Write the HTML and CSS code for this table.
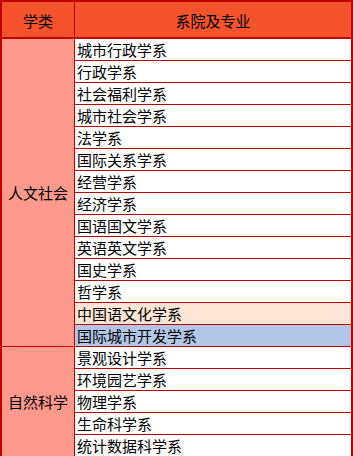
FILE: index.html
```html
<!DOCTYPE html>
<html lang="zh-CN">
<head>
<meta charset="utf-8">
<link rel="stylesheet" href="styles.css">
</head>
<body>
<div class="sheet">
  <div class="head">学类</div>
  <div class="head head-right">系院及专业</div>

  <div class="group group-human">人文社会</div>
  <div class="cell">城市行政学系</div>
  <div class="cell">行政学系</div>
  <div class="cell">社会福利学系</div>
  <div class="cell">城市社会学系</div>
  <div class="cell">法学系</div>
  <div class="cell">国际关系学系</div>
  <div class="cell">经营学系</div>
  <div class="cell">经济学系</div>
  <div class="cell">国语国文学系</div>
  <div class="cell">英语英文学系</div>
  <div class="cell">国史学系</div>
  <div class="cell">哲学系</div>
  <div class="cell cell-peach">中国语文化学系</div>
  <div class="cell cell-blue">国际城市开发学系</div>

  <div class="group group-nature">自然科学</div>
  <div class="cell">景观设计学系</div>
  <div class="cell">环境园艺学系</div>
  <div class="cell">物理学系</div>
  <div class="cell">生命科学系</div>
  <div class="cell">统计数据科学系</div>
</div>
</body>
</html>
```

FILE: styles.css
```css
html, body {
  margin: 0;
  padding: 0;
  background: #ffffff;
}

.sheet {
  width: 353px;
  box-sizing: border-box;
  display: grid;
  grid-template-columns: 73px 1fr;
  grid-auto-rows: 22px;
  border: 2px solid #c00000;
  border-bottom: none;
  font-family: "Noto Sans CJK SC", "Microsoft YaHei", sans-serif;
  font-size: 15px;
  color: #000;
}

.head {
  height: 37px;
  box-sizing: border-box;
  background: #f4532e;
  border-bottom: 2px solid #c00000;
  border-right: 1px solid #c00000;
  display: flex;
  align-items: center;
  justify-content: center;
  line-height: 1;
  padding-top: 1px;
}

.head-right {
  border-right: none;
}

.sheet > .head {
  grid-row: 1;
}

.sheet {
  grid-template-rows: 37px;
}

.group {
  background: #ff998c;
  border-right: 1px solid #c00000;
  border-bottom: 1px solid #c00000;
  box-sizing: border-box;
  display: flex;
  align-items: center;
  justify-content: center;
  line-height: 1;
}

.group-human {
  grid-row: span 14;
  grid-column: 1;
}

.group-nature {
  grid-row: span 5;
  grid-column: 1;
}

.cell {
  grid-column: 2;
  box-sizing: border-box;
  border-bottom: 1px solid #c00000;
  display: flex;
  align-items: center;
  padding-left: 2px;
  line-height: 1;
  white-space: nowrap;
}

.cell-peach {
  background: #fce4d6;
}

.cell-blue {
  background: #b4c6e7;
}
```
